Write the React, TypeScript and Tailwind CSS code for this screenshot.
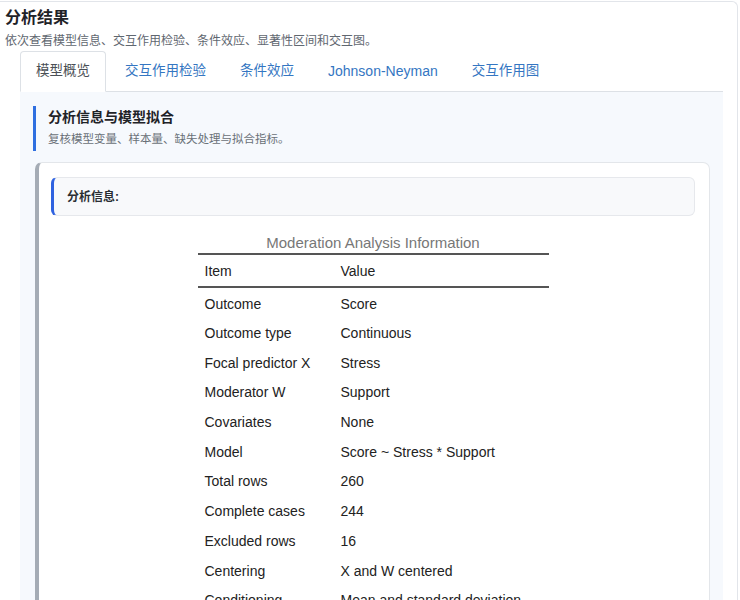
const rows: [string, string][] = [
  ["Outcome", "Score"],
  ["Outcome type", "Continuous"],
  ["Focal predictor X", "Stress"],
  ["Moderator W", "Support"],
  ["Covariates", "None"],
  ["Model", "Score ~ Stress * Support"],
  ["Total rows", "260"],
  ["Complete cases", "244"],
  ["Excluded rows", "16"],
  ["Centering", "X and W centered"],
  ["Conditioning", "Mean and standard deviation"],
];

const tabs = ["模型概览", "交互作用检验", "条件效应", "Johnson-Neyman", "交互作用图"];

function InfoTable() {
  return (
    <table className="mx-auto w-[351px] border-collapse font-['Liberation_Sans',Arial,sans-serif] text-[14px] text-[#222]">
      <caption className="text-[15px] leading-[20px] text-[#777]">Moderation Analysis Information</caption>
      <thead>
        <tr className="border-t-2 border-b-2 border-[#555]">
          <th className="h-[33px] w-[136px] px-[7px] pt-[1px] text-left align-top font-normal leading-[30px]">Item</th>
          <th className="h-[33px] px-[7px] pt-[1px] text-left align-top font-normal leading-[30px]">Value</th>
        </tr>
      </thead>
      <tbody>
        {rows.map(([k, v]) => (
          <tr key={k}>
            <td className="h-[29.7px] px-[7px] pt-[4px] pb-0">{k}</td>
            <td className="h-[29.7px] px-[7px] pt-[4px] pb-0">{v}</td>
          </tr>
        ))}
      </tbody>
    </table>
  );
}

export default function App() {
  return (
    <div className="h-[600px] w-[740px] overflow-hidden bg-white font-['Liberation_Sans','Noto_Sans_CJK_SC',sans-serif]">
      <div className="mt-[1px] w-[738px] rounded-tr-md border-t border-r border-[#e2e5ea] pl-[5px] pt-[4px]">
        <h2 className="text-[16px] font-bold leading-[24px] text-[#1f2328]">分析结果</h2>
        <p className="mt-[2px] text-[12px] leading-[18px] text-[#5f6770]">
          依次查看模型信息、交互作用检验、条件效应、显著性区间和交互图。
        </p>

        <div className="ml-[15px] mr-[14px] mt-[1px]">
          <div className="flex gap-[4px] border-b border-[#dde1e6]">
            {tabs.map((t, i) => (
              <div
                key={t}
                className={
                  i === 0
                    ? "-mb-px rounded-t-[4px] border border-b-white border-[#dde1e6] bg-white px-[15px] pb-[10px] pt-[9px] text-[13.5px] leading-[20px] text-[#4a4f55]"
                    : i === 3
                      ? "px-[15px] pb-[10px] pt-[10px] text-[14px] leading-[20px] text-[#3476c2]"
                      : "px-[15px] pb-[10px] pt-[10px] text-[13.5px] leading-[20px] text-[#3476c2]"
                }
              >
                {t}
              </div>
            ))}
          </div>

          <div className="h-[520px] bg-[#f6f9fd] pl-[13px] pr-[13px] pt-[14px]">
            <div className="border-l-[3px] border-[#2f6fe0] pl-[12px] pb-[2px]">
              <h3 className="text-[14px] font-bold leading-[22px] text-[#1f2328]">分析信息与模型拟合</h3>
              <p className="mt-[1px] text-[11.5px] leading-[20px] text-[#6a7178]">
                复核模型变量、样本量、缺失处理与拟合指标。
              </p>
            </div>

            <div className="ml-[2px] mt-[11px] rounded-[7px] border border-l-4 border-[#e3e6ea] border-l-[#a5acb5] bg-white pl-[12px] pr-[14px] pt-[14px]">
              <div className="flex h-[39px] items-center rounded-[6px] border border-l-[3px] border-[#e6e8ec] border-l-[#2f62e0] bg-[#f8f9fb] pl-[13px]">
                <span className="text-[12px] font-bold text-[#2a2e33]">分析信息:</span>
              </div>
              <div className="mt-[17px]">
                <InfoTable />
              </div>
            </div>
          </div>
        </div>
      </div>
    </div>
  );
}
